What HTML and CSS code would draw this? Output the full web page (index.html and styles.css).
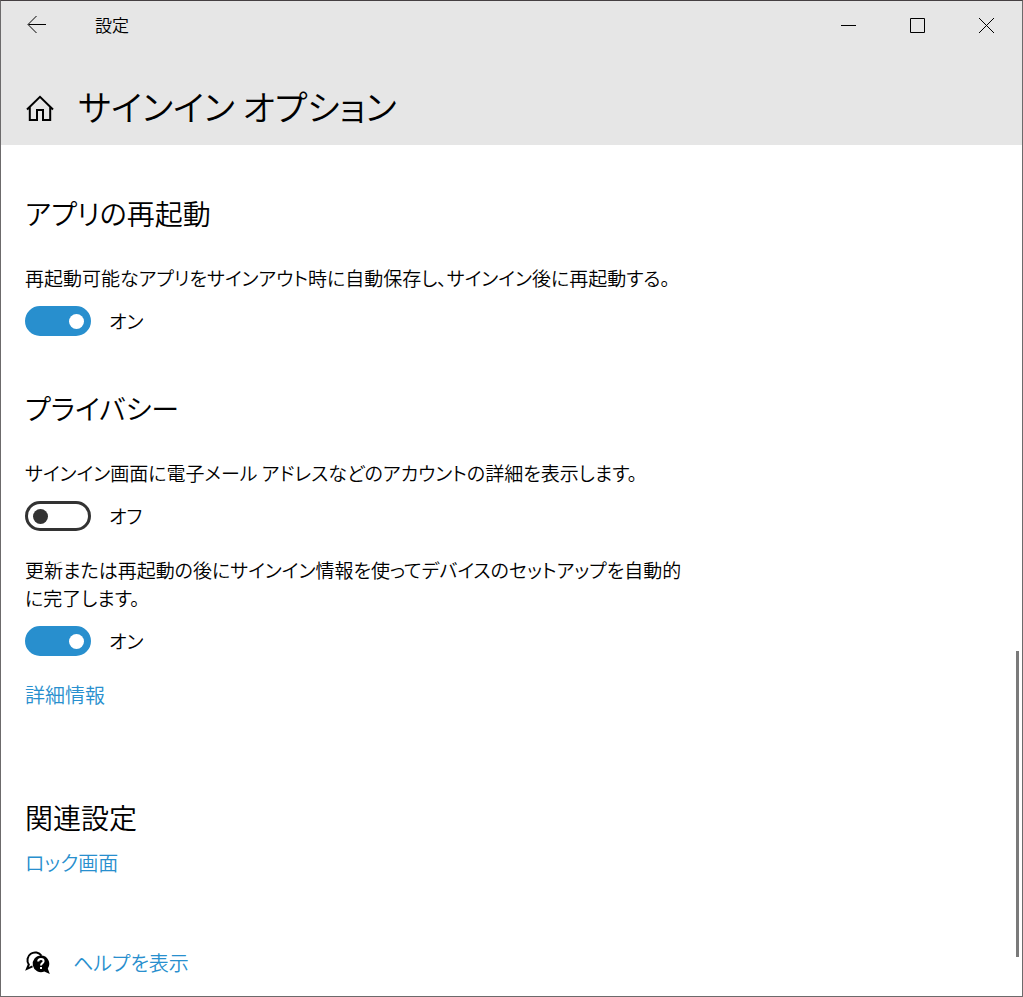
FILE: index.html
```html
<!DOCTYPE html>
<html lang="ja">
<head>
<meta charset="utf-8">
<title>設定</title>
<link rel="stylesheet" href="styles.css">
</head>
<body>
<div class="window">
  <header class="header">
    <div class="titlebar">
      <button class="back" type="button" aria-label="戻る">
        <svg width="20" height="18" viewBox="0 0 20 18"><path d="M19 8.500H1.500M9.500 0L1 8.500l8.500 8.500"/></svg>
      </button>
      <span class="app-name">設定</span>
      <div class="controls">
        <button class="control" type="button" aria-label="最小化">
          <svg width="15" height="15" viewBox="0 0 15 15"><path d="M0 7.500h15"/></svg>
        </button>
        <button class="control" type="button" aria-label="最大化">
          <svg width="15" height="15" viewBox="0 0 15 15"><path d="M.5 .5h14v14H.5z"/></svg>
        </button>
        <button class="control" type="button" aria-label="閉じる">
          <svg width="15" height="15" viewBox="0 0 15 15"><path d="M0 0l15 15M15 0L0 15"/></svg>
        </button>
      </div>
    </div>
    <div class="page-title">
      <button class="home" type="button" aria-label="ホーム">
        <svg width="28" height="32" viewBox="0 0 28 32"><path d="M1 19.500L14 6.800l13 12.700M3.800 17v13H11V20h6v10h7.200V17"/></svg>
      </button>
      <h1 class="title">サインイン オプション</h1>
    </div>
  </header>
  <main class="content">
    <section class="section">
      <h2 class="heading">アプリの再起動</h2>
      <div class="setting">
        <label class="text" for="restart">再起動可能なアプリをサインアウト時に自動保存し、サインイン後に再起動する。</label>
        <div class="switch"><input class="toggle" id="restart" type="checkbox" role="switch" checked><span>オン</span></div>
      </div>
    </section>
    <section class="section">
      <h2 class="heading">プライバシー</h2>
      <div class="setting">
        <label class="text" for="account">サインイン画面に電子メール アドレスなどのアカウントの詳細を表示します。</label>
        <div class="switch"><input class="toggle" id="account" type="checkbox" role="switch"><span>オフ</span></div>
      </div>
      <div class="setting">
        <label class="text" for="setup">更新または再起動の後にサインイン情報を使ってデバイスのセットアップを自動的<br>に完了します。</label>
        <div class="switch"><input class="toggle" id="setup" type="checkbox" role="switch" checked><span>オン</span></div>
      </div>
      <a class="link" href="#">詳細情報</a>
    </section>
    <section class="related">
      <h2 class="heading">関連設定</h2>
      <a class="link" href="#">ロック画面</a>
    </section>
    <div class="help">
      <svg class="help-icon" width="26" height="26" viewBox="0 0 26 26" aria-hidden="true">
        <path class="bubble" d="M7.500 16.400L2 18.800 3.800 14.500A7.300 7.300 0 1 1 16.500 5.800"/>
        <path d="M16 5.500a8.300 8.300 0 0 1 6.800 13l2 5.500-5.500-2.600A8.300 8.300 0 1 1 16 5.500z"/>
        <path class="mark" d="M13.200 11.600c0-3.600 5.400-3.200 5.400-.4 0 1.900-2.600 2-2.600 4.300M16 17v2"/>
      </svg>
      <a class="link" href="#">ヘルプを表示</a>
    </div>
    <div class="scrollbar"></div>
  </main>
</div>
</body>
</html>
```
FILE: styles.css
```css
* { box-sizing: border-box; }

body {
  margin: 0;
  background: #fff;
  color: #000;
  font-family: "Noto Sans CJK JP", sans-serif;
  font-size: 19px;
  font-weight: 350;
  line-height: 28px;
  font-feature-settings: "palt";
}

button {
  display: flex;
  align-items: center;
  justify-content: center;
  padding: 0;
  border: 0;
  background: none;
}

svg { fill: none; stroke: #000; }

.window {
  display: flex;
  flex-direction: column;
  min-height: 100vh;
  border: 1px solid #6c6a6b;
  border-top-color: #454042;
}

.header {
  height: 144px;
  background: #e6e6e6;
}

.titlebar {
  display: flex;
  align-items: center;
  height: 48px;
}

.back { width: 72px; height: 48px; }

.app-name {
  margin-left: 22px;
  font-size: 17px;
}

.controls { display: flex; margin: 0 1px 0 auto; }
.control { width: 69px; height: 48px; }

.page-title {
  display: flex;
  align-items: center;
  gap: 24px;
  padding: 26px 25px 0;
}

.home svg { stroke-width: 2; }

.title {
  margin: 0;
  font-size: 35px;
  font-weight: 350;
  line-height: 62px;
}

.content {
  position: relative;
  flex: 1;
  padding: 48px 24px 18px;
}

.section { margin-bottom: 52px; }

.heading {
  margin: 0 0 31px;
  font-size: 28px;
  font-weight: 350;
  line-height: 40px;
}

.setting { margin-bottom: 25px; }
.section > .setting:last-child { margin-bottom: 0; }
.text { display: block; }

.switch {
  display: flex;
  align-items: center;
  gap: 18px;
  margin-top: 14px;
}

.toggle {
  appearance: none;
  display: flex;
  align-items: center;
  width: 66px;
  height: 30px;
  margin: 0;
  padding: 0 5px;
  border: 3px solid #333;
  border-radius: 15px;
}

.toggle::before {
  content: "";
  width: 15px;
  height: 15px;
  border-radius: 50%;
  background: #333;
}

.toggle:checked {
  justify-content: flex-end;
  padding: 0 4px;
  border-color: #288fce;
  background: #288fce;
}

.toggle:checked::before { background: #fff; }

.link {
  display: block;
  color: #288fce;
  font-size: 20px;
  text-decoration: none;
}

.related { padding-top: 36px; }
.related .heading { margin-bottom: 12px; }

.help {
  display: flex;
  align-items: center;
  gap: 22px;
  margin-top: 72px;
}

.help-icon path { fill: #000; stroke: none; }
.help-icon .bubble { fill: none; stroke: #000; stroke-width: 2; }
.help-icon .mark { fill: none; stroke: #fff; stroke-width: 2; }

.scrollbar {
  position: absolute;
  right: 3px;
  bottom: 39px;
  width: 3px;
  height: 36%;
  background: #7a7a7a;
}
```
